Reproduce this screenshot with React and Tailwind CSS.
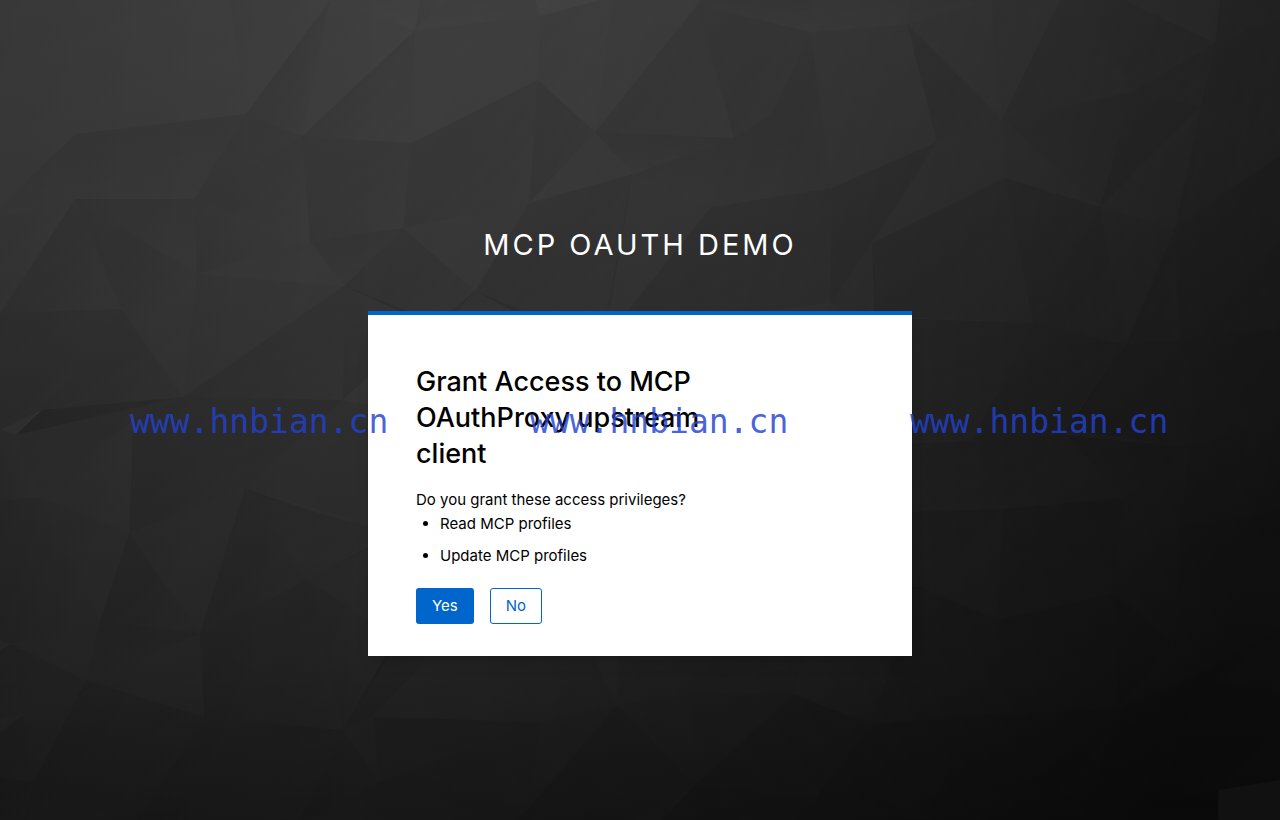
// Corner points and shade of every facet in the backdrop.
// v = darker at the top, h = darker on the left, d = darker at the top left, l = light
const FACETS = [
  ['l', '0,0 230,0 246,114 76,134 0,205'],
  ['l', '230,0 330,0 246,114'],
  ['d', '330,0 302,136 246,114'],
  ['l', '330,0 415,30 302,136'],
  ['l', '330,0 420,0 415,30'],
  ['h', '420,0 445,0 415,30'],
  ['d', '415,30 411,143 302,136'],
  ['l', '415,30 540,16 538,80 411,143'],
  ['l', '445,0 535,0 540,16 415,30'],
  ['v', '76,134 246,114 194,199 75,199 0,217 0,205'],
  ['d', '246,114 302,136 194,199'],
  ['d', '302,136 310,241 194,199'],
  ['d', '302,136 411,143 403,228 310,241'],
  ['d', '411,143 538,80 529,203 403,228'],
  ['l', '0,217 75,199 0,313'],
  ['d', '75,199 121,309 0,313'],
  ['v', '75,199 194,199 197,274'],
  ['d', '75,199 197,274 121,309'],
  ['h', '194,199 310,241 197,274'],
  ['l', '310,241 344,286 197,274'],
  ['v', '310,241 403,228 344,286'],
  ['d', '0,313 121,309 42,410 0,430'],
  ['d', '121,309 183,397 16,435 42,410'],
  ['l', '121,309 197,274 183,397'],
  ['l', '197,274 344,286 183,397'],
  ['d', '344,286 343,400 183,397'],
  ['h', '344,286 430,320 343,400'],
  ['d', '403,228 475,291 440,330 344,286'],
  ['l', '403,228 529,203 475,291'],
  ['l', '538,80 540,16 600,0 612,0 595,132'],
  ['d', '538,80 595,132 529,203'],
  ['l', '612,0 700,0 697,5 595,132'],
  ['d', '697,5 734,138 595,132'],
  ['d', '697,5 811,32 771,115 734,138'],
  ['v', '700,0 810,0 811,32 697,5'],
  ['l', '810,0 910,0 907,24 811,32'],
  ['v', '595,132 734,138 633,174'],
  ['l', '595,132 633,174 529,203'],
  ['l', '633,174 711,207 620,320 605,320'],
  ['d', '529,203 633,174 608,320 530,320 475,291'],
  ['v', '734,138 711,207 633,174'],
  ['v', '771,115 832,188 711,207 734,138'],
  ['d', '811,32 832,188 771,115'],
  ['l', '811,32 907,24 937,142 832,188'],
  ['d', '711,207 832,188 830,303 690,320 620,320'],
  ['v', '475,291 545,320 440,320'],
  ['l', '910,0 991,0 907,24'],
  ['l', '907,24 991,0 1002,119'],
  ['d', '907,24 1002,119 937,142'],
  ['l', '991,0 1060,0 1002,119'],
  ['d', '1060,0 1083,0 1132,92 1002,119'],
  ['d', '1083,0 1124,0 1215,43 1132,92'],
  ['l', '1124,0 1220,0 1215,43'],
  ['d', '1220,0 1280,0 1280,18 1215,43'],
  ['d', '832,188 937,142 872,243 830,303'],
  ['l', '937,142 1002,119 1005,178 872,243'],
  ['v', '1002,119 1132,92 1100,207'],
  ['l', '1002,119 1100,207 1005,178'],
  ['d', '1132,92 1201,106 1100,207'],
  ['d', '1132,92 1215,43 1201,106'],
  ['d', '1215,43 1280,18 1280,135 1201,106'],
  ['h', '1201,106 1280,135 1280,155 1175,228'],
  ['l', '1201,106 1175,228 1100,207'],
  ['d', '872,243 1005,178 1033,323 874,316'],
  ['d', '1005,178 1100,207 1033,323'],
  ['d', '1100,207 1126,345 1033,323'],
  ['l', '1100,207 1175,228 1126,345'],
  ['d', '1175,228 1280,155 1280,240 1180,340'],
  ['d', '1175,228 1180,340 1126,345'],
  ['d', '1180,340 1280,240 1280,328'],
  ['l', '872,243 874,330 830,303'],
  ['v', '900,318 1033,323 972,441 900,444'],
  ['d', '1033,323 1126,345 1066,435 972,441'],
  ['d', '1126,345 1180,340 1190,447 1066,430'],
  ['v', '1180,340 1280,328 1280,418 1190,447'],
  ['v', '16,435 42,410 183,397 133,420 40,497'],
  ['h', '0,430 16,435 40,497 0,501'],
  ['l', '133,420 129,533 40,497'],
  ['d', '133,420 245,488 129,533'],
  ['d', '183,397 343,400 245,488 133,420'],
  ['l', '343,400 400,412 400,534 245,488'],
  ['d', '0,501 40,497 11,644 0,640'],
  ['h', '40,497 100,621 11,644'],
  ['l', '40,497 129,533 100,621'],
  ['d', '129,533 200,633 100,621'],
  ['l', '129,533 245,488 200,633'],
  ['d', '245,488 307,580 200,633'],
  ['v', '245,488 315,512 307,580'],
  ['l', '315,512 400,534 307,580'],
  ['l', '307,580 400,530 400,640'],
  ['d', '307,580 343,730 200,633'],
  ['h', '307,580 400,640 343,730'],
  ['d', '200,633 343,730 204,717'],
  ['v', '100,621 200,633 86,680'],
  ['l', '11,644 100,621 86,680'],
  ['v', '11,644 86,680 23,715'],
  ['v', '0,650 11,644 23,715 0,718'],
  ['l', '86,680 200,633 204,717'],
  ['l', '23,715 86,680 34,782'],
  ['v', '0,732 23,715 34,782 0,778'],
  ['d', '86,680 204,717 137,820 116,820 34,782'],
  ['d', '204,717 343,730 300,820 137,820'],
  ['d', '343,730 380,782 300,820'],
  ['l', '343,730 373,717 380,782'],
  ['v', '0,778 34,782 23,820 0,820'],
  ['v', '34,782 116,820 23,820'],
  ['d', '385,656 430,656 373,717 343,730'],
  ['l', '430,656 500,650 540,722 373,717'],
  ['l', '500,650 590,650 540,722'],
  ['l', '590,650 617,705 540,722'],
  ['v', '373,717 540,722 430,762 380,782'],
  ['l', '617,650 700,650 690,694 617,705'],
  ['l', '700,650 805,650 794,694 690,694'],
  ['d', '540,722 530,806 380,782 430,762'],
  ['l', '540,722 617,705 530,806'],
  ['d', '617,705 695,785 635,820 515,820 530,806'],
  ['l', '617,705 690,694 695,785'],
  ['l', '690,694 794,694 695,785'],
  ['d', '794,694 870,724 816,799 695,785'],
  ['d', '695,785 816,799 790,820 662,820'],
  ['v', '380,782 530,806 515,820 300,820'],
  ['v', '905,587 921,587 998,620 980,715 870,724 895,656'],
  ['v', '900,512 1002,509 921,587 900,600'],
  ['v', '900,444 972,441 1002,509 900,512'],
  ['v', '972,441 1066,435 1002,509'],
  ['l', '1002,509 998,620 921,587'],
  ['l', '1066,435 1123,498 1002,509'],
  ['v', '1066,435 1190,447 1123,498'],
  ['v', '1002,509 1123,498 1114,593 998,620'],
  ['l', '1123,498 1190,447 1180,528 1114,593'],
  ['h', '1190,447 1280,418 1280,510 1180,528'],
  ['v', '1180,528 1280,510 1280,620 1174,644'],
  ['l', '1180,528 1174,644 1114,593'],
  ['v', '998,620 1114,593 1118,708 980,715'],
  ['d', '1114,593 1174,644 1118,708'],
  ['l', '1174,644 1190,678 1118,708'],
  ['l', '1174,644 1280,620 1280,628 1190,678'],
  ['d', '870,724 980,715 928,809 816,799'],
  ['d', '980,715 1118,708 1036,776 928,809'],
  ['d', '1118,708 1086,812 1036,776'],
  ['d', '1118,708 1190,678 1218,790'],
  ['d', '1118,708 1218,790 1086,812'],
  ['v', '1190,678 1280,690 1280,732 1218,790'],
  ['d', '1190,678 1280,628 1280,690'],
  ['v', '928,809 1036,776 1086,812 1080,820 928,820'],
  ['v', '816,799 928,809 928,820 790,820'],
  ['v', '1086,812 1218,790 1218,820 1080,820'],
]

const WATERMARKS = ['left-[130px]', 'left-[530px]', 'left-[910px]']

const PRIVILEGES = ['Read MCP profiles', 'Update MCP profiles']

function Backdrop() {
  return (
    <svg
      className="absolute inset-0 h-full w-full"
      viewBox="0 0 1280 820"
      preserveAspectRatio="xMidYMid slice"
      aria-hidden="true"
    >
      <defs>
        <linearGradient id="base" x1="0" y1="0" x2="0" y2="1">
          <stop offset="0" stopColor="#444" />
          <stop offset="0.25" stopColor="#3e3e3e" />
          <stop offset="0.38" stopColor="#393939" />
          <stop offset="0.6" stopColor="#303030" />
          <stop offset="0.8" stopColor="#282828" />
          <stop offset="1" stopColor="#1b1b1b" />
        </linearGradient>
        <linearGradient id="left" x1="0" y1="0" x2="400" y2="0" gradientUnits="userSpaceOnUse">
          <stop offset="0" stopColor="#000" stopOpacity="0.1" />
          <stop offset="1" stopColor="#000" stopOpacity="0" />
        </linearGradient>
        <linearGradient id="right" x1="400" y1="0" x2="1330" y2="400" gradientUnits="userSpaceOnUse">
          <stop offset="0" stopColor="#000" stopOpacity="0" />
          <stop offset="0.22" stopColor="#000" stopOpacity="0.06" />
          <stop offset="0.41" stopColor="#000" stopOpacity="0.15" />
          <stop offset="0.62" stopColor="#000" stopOpacity="0.3" />
          <stop offset="0.8" stopColor="#000" stopOpacity="0.46" />
          <stop offset="0.92" stopColor="#000" stopOpacity="0.56" />
          <stop offset="1.0" stopColor="#000" stopOpacity="0.63" />
        </linearGradient>
        <linearGradient id="v" x1="0" y1="0" x2="0.3" y2="1">
          <stop offset="0" stopColor="#000" stopOpacity="0.14" />
          <stop offset="0.4" stopColor="#000" stopOpacity="0.11" />
          <stop offset="1" stopColor="#000" stopOpacity="0.05" />
        </linearGradient>
        <linearGradient id="h" x1="0" y1="0" x2="1" y2="0.2">
          <stop offset="0" stopColor="#000" stopOpacity="0.12" />
          <stop offset="1" stopColor="#000" stopOpacity="0.05" />
        </linearGradient>
        <linearGradient id="d" x1="0" y1="0" x2="1" y2="1">
          <stop offset="0" stopColor="#000" stopOpacity="0.14" />
          <stop offset="0.5" stopColor="#000" stopOpacity="0.12" />
          <stop offset="1" stopColor="#000" stopOpacity="0.04" />
        </linearGradient>
        <linearGradient id="l" x1="0" y1="0" x2="0.6" y2="1">
          <stop offset="0" stopColor="#000" stopOpacity="0.09" />
          <stop offset="1" stopColor="#000" stopOpacity="0.03" />
        </linearGradient>
      </defs>
      <rect width="1280" height="820" fill="url(#base)" />
      <rect width="1280" height="820" fill="url(#left)" />
      <rect width="1280" height="820" fill="url(#right)" />
      {FACETS.map(([shade, points]) => (
        <polygon key={points} points={points} fill={`url(#${shade})`} />
      ))}
      <polygon points="1218,790 1280,780 1280,820 1218,820" fill="#111" />
    </svg>
  )
}

export default function App() {
  return (
    <div className="relative min-h-screen overflow-hidden bg-[#1a1a1a] font-[Inter,sans-serif] text-black">
      <Backdrop />

      <div className="relative mx-auto w-full max-w-[544px] pt-[223px]">
        <header className="pb-11 text-center text-[29px] leading-[44px] tracking-[3px] text-white uppercase">
          MCP OAuth Demo
        </header>

        <main className="border-t-4 border-[#0066cc] bg-white px-12 pt-[49px] pb-8 shadow-lg">
          <h1 className="max-w-[300px] text-[27px] leading-9 font-medium">
            Grant Access to MCP OAuthProxy upstream client
          </h1>

          <form className="pt-4" onSubmit={(e) => e.preventDefault()}>
            <p className="text-[15px] leading-6">Do you grant these access privileges?</p>
            <ul className="flex list-disc flex-col gap-2 pl-6 text-[15px] leading-6">
              {PRIVILEGES.map((item) => (
                <li key={item}>{item}</li>
              ))}
            </ul>
            <div className="flex gap-4 pt-5">
              <button type="submit" className="h-9 rounded-[3px] bg-[#0066cc] px-4 text-[15px] text-white">
                Yes
              </button>
              <button
                type="button"
                className="h-9 rounded-[3px] border border-[#0066cc] bg-white px-[15px] text-[15px] text-[#0066cc]"
              >
                No
              </button>
            </div>
          </form>
        </main>
      </div>

      {/* Site watermark, drawn over everything */}
      <div className="pointer-events-none absolute inset-0 font-['DejaVu_Sans_Mono',monospace] text-[33px] leading-10 text-[#2242d0]/83">
        {WATERMARKS.map((left) => (
          <span key={left} className={`absolute top-[402px] ${left}`}>
            www.hnbian.cn
          </span>
        ))}
      </div>
    </div>
  )
}
